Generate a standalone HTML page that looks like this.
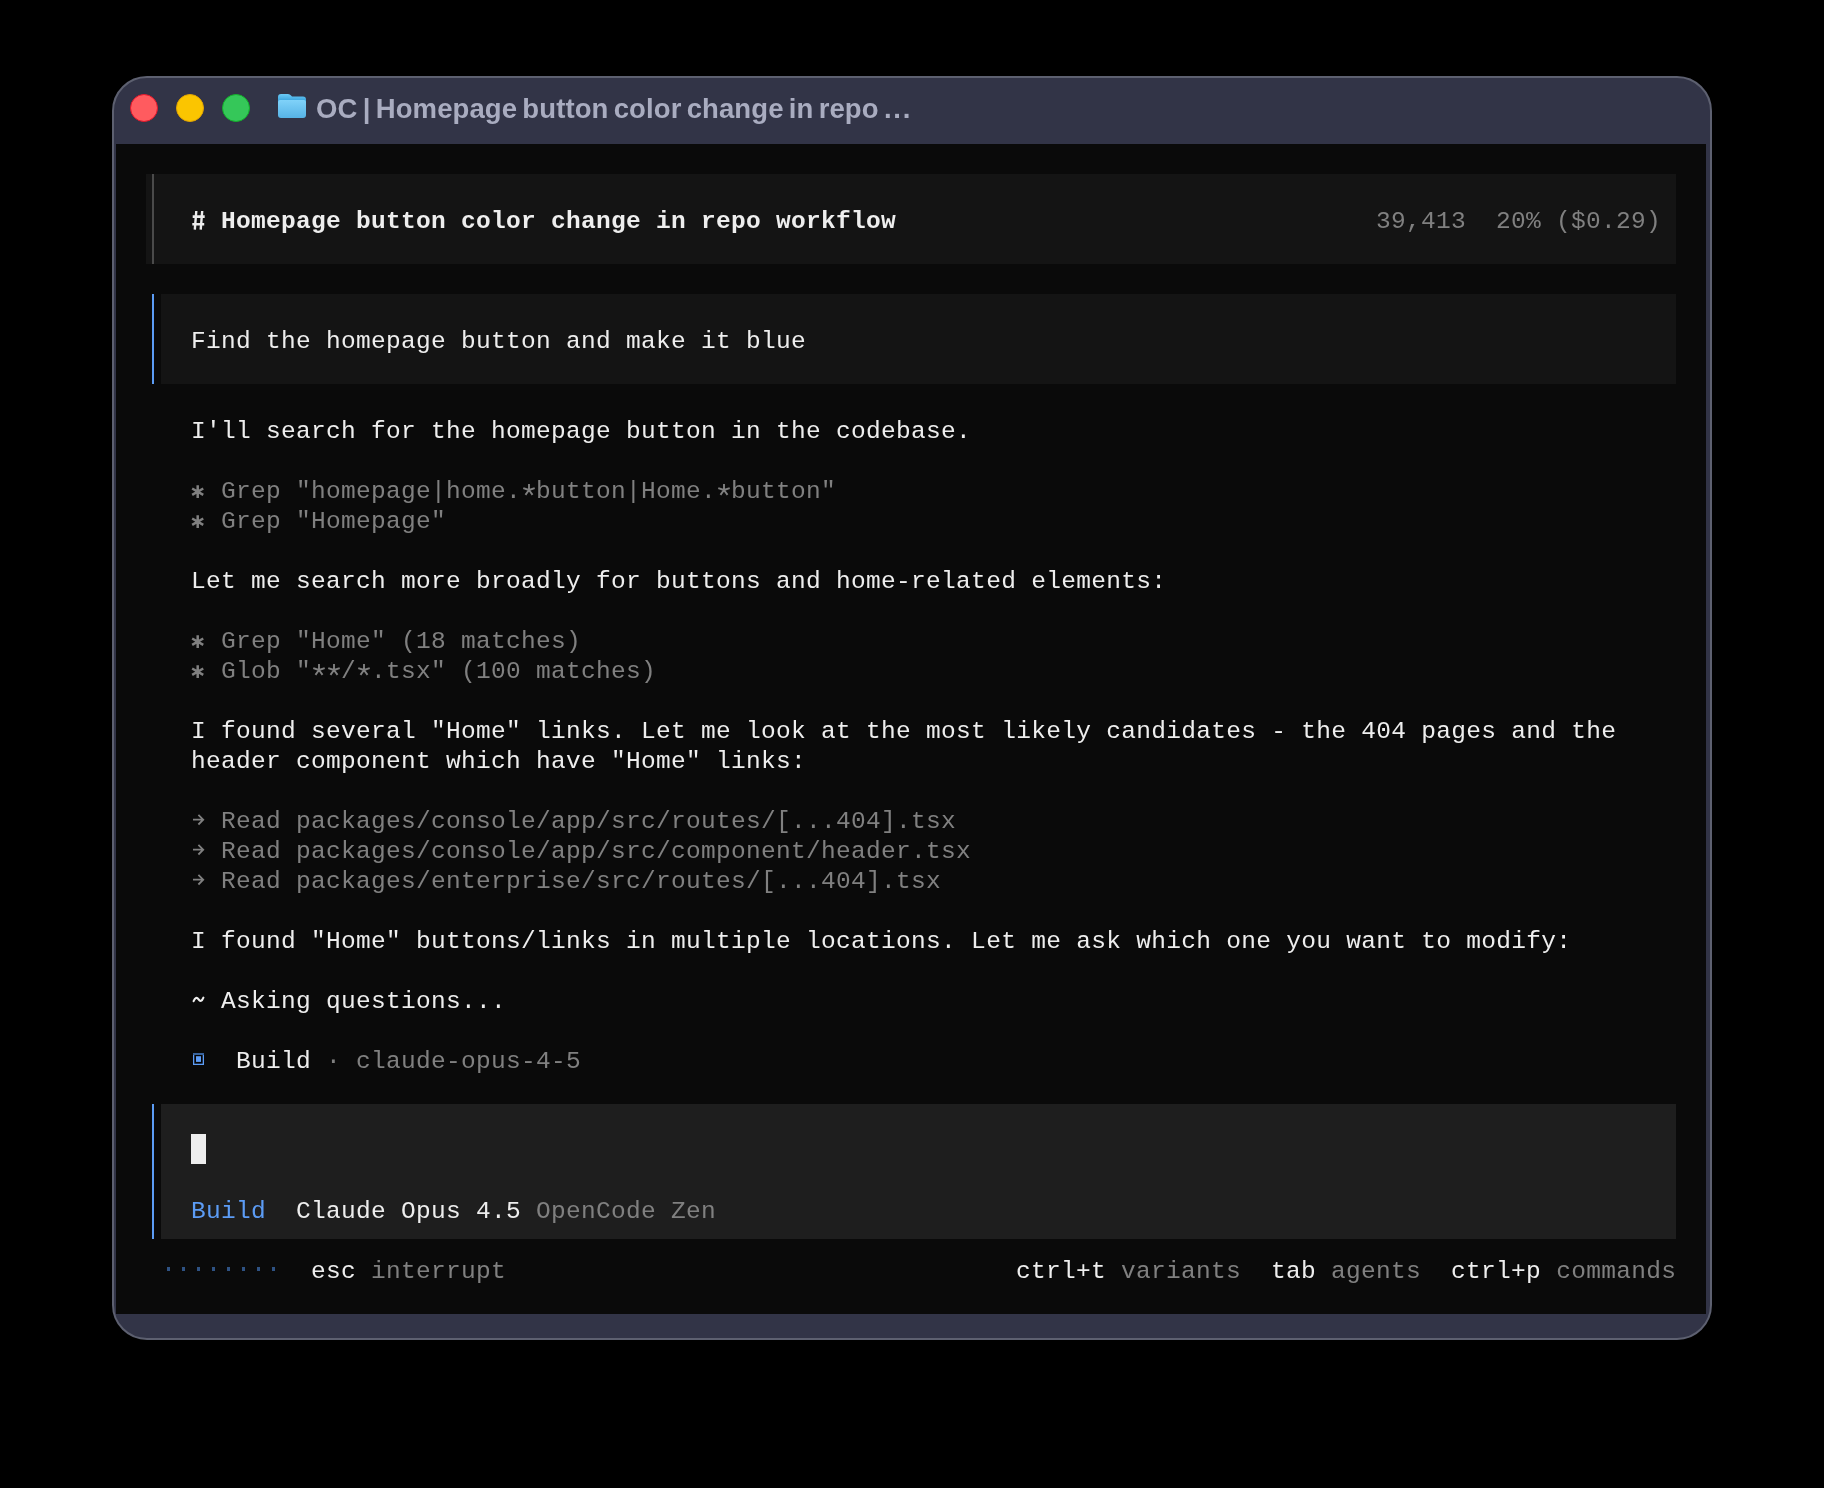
<!DOCTYPE html>
<html><head><meta charset="utf-8"><style>
html,body{margin:0;padding:0;background:#000;width:1824px;height:1488px;overflow:hidden;position:relative}
.win{position:absolute;left:112px;top:76px;width:1600px;height:1264px;box-sizing:border-box;border:2px solid #5d6070;border-radius:35px;background:#323447}
.content{position:absolute;left:116px;top:144px;width:1590px;height:1170px;background:#0a0a0a}
.r{position:absolute;will-change:transform;height:30px;line-height:30px;font-family:"Liberation Mono",monospace;font-size:24.5px;letter-spacing:0.3px;white-space:pre}
.tl{position:absolute;width:28px;height:28px;border-radius:50%;box-sizing:border-box;top:94px}
.title{position:absolute;left:316px;top:91px;will-change:transform;font-family:"Liberation Sans",sans-serif;font-weight:bold;font-size:27.5px;letter-spacing:0.1px;word-spacing:-2.5px;color:#a9acc0;white-space:pre;line-height:36px}
</style></head><body>
<div class="win"></div>
<div class="tl" style="left:130px;background:#ff5b5f;border:1.5px solid #e5162a"></div>
<div class="tl" style="left:176px;background:#fbc500;border:1.5px solid #e3a500"></div>
<div class="tl" style="left:222px;background:#35c759;border:1.5px solid #12b02a"></div>
<svg style="position:absolute;left:277px;top:93px" width="30" height="26" viewBox="0 0 30 26">
<defs><linearGradient id="bg2" x1="0" y1="0" x2="0" y2="1"><stop offset="0" stop-color="#6ccaf6"/><stop offset="1" stop-color="#2b98d6"/></linearGradient></defs><path d="M1 4 Q1 1 4 1 H11 Q13 1 14 2.5 L15 3.5 H26 Q29 3.5 29 6.5 V10 H1Z" fill="url(#bg2)"/>
<defs><linearGradient id="fg" x1="0" y1="0" x2="0" y2="1"><stop offset="0" stop-color="#80d2f9"/><stop offset="1" stop-color="#56b3e6"/></linearGradient></defs><path d="M1 9 Q1 7 3 7 H27 Q29 7 29 9 V22 Q29 25 26 25 H4 Q1 25 1 22Z" fill="url(#fg)"/>
</svg>
<div class="title">OC | Homepage button color change in repo <span style="letter-spacing:1.8px">...</span></div>
<div class="content"></div>
<div style="position:absolute;left:146px;top:174px;width:1530px;height:90px;background:#141414"></div>
<div style="position:absolute;left:152px;top:174px;width:2px;height:90px;background:#4a4a4a"></div>
<div style="position:absolute;left:161px;top:294px;width:1515px;height:90px;background:#141414"></div>
<div style="position:absolute;left:152px;top:294px;width:2px;height:90px;background:#5c9cf5"></div>
<div style="position:absolute;left:161px;top:1104px;width:1515px;height:135px;background:#1e1e1e"></div>
<div style="position:absolute;left:152px;top:1104px;width:2px;height:135px;background:#5c9cf5"></div>
<div style="position:absolute;left:191px;top:1134px;width:15px;height:30px;background:#eeeeee"></div>
<svg style="position:absolute;left:193px;top:1053px" width="12" height="12" viewBox="0 0 12 12"><rect x="0" y="0" width="11" height="12" fill="#5c9cf5"/><rect x="1.3" y="2" width="8.4" height="8.7" fill="#050505"/><rect x="0" y="0" width="11" height="2" fill="#38639c"/><rect x="3" y="3.2" width="5" height="5.7" fill="#5c9cf5"/></svg>
<div class="r" style="top:207px;left:191px"><span style="color:#eeeeee;font-weight:bold">  Homepage button color change in repo workflow</span></div><div class="r" style="top:207px;left:1376px"><span style="color:#808080">39,413  20% ($0.29)</span></div><div class="r" style="top:327px;left:191px"><span style="color:#eeeeee">Find the homepage button and make it blue</span></div><div class="r" style="top:417px;left:191px"><span style="color:#eeeeee">I'll search for the homepage button in the codebase.</span></div><div class="r" style="top:477px;left:221px"><span style="color:#808080">Grep "homepage|home. button|Home. button"</span></div><div class="r" style="top:507px;left:221px"><span style="color:#808080">Grep "Homepage"</span></div><div class="r" style="top:567px;left:191px"><span style="color:#eeeeee">Let me search more broadly for buttons and home-related elements:</span></div><div class="r" style="top:627px;left:221px"><span style="color:#808080">Grep "Home" (18 matches)</span></div><div class="r" style="top:657px;left:221px"><span style="color:#808080">Glob "  / .tsx" (100 matches)</span></div><div class="r" style="top:717px;left:191px"><span style="color:#eeeeee">I found several "Home" links. Let me look at the most likely candidates - the 404 pages and the</span></div><div class="r" style="top:747px;left:191px"><span style="color:#eeeeee">header component which have "Home" links:</span></div><div class="r" style="top:807px;left:221px"><span style="color:#808080">Read packages/console/app/src/routes/[...404].tsx</span></div><div class="r" style="top:837px;left:221px"><span style="color:#808080">Read packages/console/app/src/component/header.tsx</span></div><div class="r" style="top:867px;left:221px"><span style="color:#808080">Read packages/enterprise/src/routes/[...404].tsx</span></div><div class="r" style="top:927px;left:191px"><span style="color:#eeeeee">I found "Home" buttons/links in multiple locations. Let me ask which one you want to modify:</span></div><div class="r" style="top:987px;left:191px"><span style="color:#eeeeee">  Asking questions...</span></div><div class="r" style="top:1047px;left:236px"><span style="color:#eeeeee">Build</span><span style="color:#808080"> · </span><span style="color:#808080">claude-opus-4-5</span></div><div class="r" style="top:1197px;left:191px"><span style="color:#5c9cf5">Build</span><span style="color:#eeeeee">  </span><span style="color:#eeeeee">Claude Opus 4.5</span><span style="color:#808080"> OpenCode Zen</span></div><div class="r" style="top:1257px;left:311px"><span style="color:#eeeeee">esc</span><span style="color:#808080"> interrupt</span></div><div class="r" style="top:1257px;left:1016px"><span style="color:#eeeeee">ctrl+t</span><span style="color:#808080"> variants</span><span style="color:#eeeeee">  tab</span><span style="color:#808080"> agents</span><span style="color:#eeeeee">  ctrl+p</span><span style="color:#808080"> commands</span></div>
<svg style="position:absolute;left:188px;top:482px" width="20" height="20" viewBox="0 0 20 20"><path d="M9.70 3.30L9.70 16.10M4.16 6.50L15.24 12.90M4.16 12.90L15.24 6.50" stroke="#808080" stroke-width="2.5" fill="none"/></svg><svg style="position:absolute;left:188px;top:512px" width="20" height="20" viewBox="0 0 20 20"><path d="M9.70 3.30L9.70 16.10M4.16 6.50L15.24 12.90M4.16 12.90L15.24 6.50" stroke="#808080" stroke-width="2.5" fill="none"/></svg><svg style="position:absolute;left:188px;top:632px" width="20" height="20" viewBox="0 0 20 20"><path d="M9.70 3.30L9.70 16.10M4.16 6.50L15.24 12.90M4.16 12.90L15.24 6.50" stroke="#808080" stroke-width="2.5" fill="none"/></svg><svg style="position:absolute;left:188px;top:662px" width="20" height="20" viewBox="0 0 20 20"><path d="M9.70 3.30L9.70 16.10M4.16 6.50L15.24 12.90M4.16 12.90L15.24 6.50" stroke="#808080" stroke-width="2.5" fill="none"/></svg><svg style="position:absolute;left:518.50px;top:480.25px" width="20" height="20" viewBox="0 0 20 20"><path d="M10 10L10.00 4.00M10 10L15.71 8.15M10 10L13.53 14.85M10 10L6.47 14.85M10 10L4.29 8.15" stroke="#808080" stroke-width="1.9" stroke-linecap="butt" fill="none"/></svg><svg style="position:absolute;left:713.50px;top:480.25px" width="20" height="20" viewBox="0 0 20 20"><path d="M10 10L10.00 4.00M10 10L15.71 8.15M10 10L13.53 14.85M10 10L6.47 14.85M10 10L4.29 8.15" stroke="#808080" stroke-width="1.9" stroke-linecap="butt" fill="none"/></svg><svg style="position:absolute;left:308.50px;top:660.25px" width="20" height="20" viewBox="0 0 20 20"><path d="M10 10L10.00 4.00M10 10L15.71 8.15M10 10L13.53 14.85M10 10L6.47 14.85M10 10L4.29 8.15" stroke="#808080" stroke-width="1.9" stroke-linecap="butt" fill="none"/></svg><svg style="position:absolute;left:323.50px;top:660.25px" width="20" height="20" viewBox="0 0 20 20"><path d="M10 10L10.00 4.00M10 10L15.71 8.15M10 10L13.53 14.85M10 10L6.47 14.85M10 10L4.29 8.15" stroke="#808080" stroke-width="1.9" stroke-linecap="butt" fill="none"/></svg><svg style="position:absolute;left:353.50px;top:660.25px" width="20" height="20" viewBox="0 0 20 20"><path d="M10 10L10.00 4.00M10 10L15.71 8.15M10 10L13.53 14.85M10 10L6.47 14.85M10 10L4.29 8.15" stroke="#808080" stroke-width="1.9" stroke-linecap="butt" fill="none"/></svg><svg style="position:absolute;left:188px;top:206px" width="22" height="28" viewBox="0 0 22 28"><path d="M8.3 5L6.8 23.6M14.2 5L12.7 23.6" stroke="#eeeeee" stroke-width="2.4" fill="none"/><path d="M4.7 10.6H16.7M4.3 18.2H16.2" stroke="#eeeeee" stroke-width="2.6" fill="none"/></svg><svg style="position:absolute;left:188px;top:990px" width="20" height="20" viewBox="0 0 20 20"><path d="M5.6 11.2Q7.9 5.6 10.6 9.4Q13.1 13.2 15.4 7.6" stroke="#eeeeee" stroke-width="2.1" fill="none" stroke-linecap="round"/></svg>
<svg style="position:absolute;left:190px;top:812px" width="16" height="16" viewBox="0 0 16 16"><path d="M3 7.7H13.2M8.4 2.9L13.2 7.7L8.4 12.5" stroke="#808080" stroke-width="1.8" fill="none"/></svg><svg style="position:absolute;left:190px;top:842px" width="16" height="16" viewBox="0 0 16 16"><path d="M3 7.7H13.2M8.4 2.9L13.2 7.7L8.4 12.5" stroke="#808080" stroke-width="1.8" fill="none"/></svg><svg style="position:absolute;left:190px;top:872px" width="16" height="16" viewBox="0 0 16 16"><path d="M3 7.7H13.2M8.4 2.9L13.2 7.7L8.4 12.5" stroke="#808080" stroke-width="1.8" fill="none"/></svg>
<div style="position:absolute;left:167px;top:1267px;width:3px;height:4px;background:#2e5283"></div><div style="position:absolute;left:182px;top:1267px;width:3px;height:4px;background:#2e5283"></div><div style="position:absolute;left:197px;top:1267px;width:3px;height:4px;background:#2e5283"></div><div style="position:absolute;left:212px;top:1267px;width:3px;height:4px;background:#2e5283"></div><div style="position:absolute;left:227px;top:1267px;width:3px;height:4px;background:#2e5283"></div><div style="position:absolute;left:242px;top:1267px;width:3px;height:4px;background:#2e5283"></div><div style="position:absolute;left:257px;top:1267px;width:3px;height:4px;background:#2e5283"></div><div style="position:absolute;left:272px;top:1267px;width:3px;height:4px;background:#2e5283"></div>
</body></html>
